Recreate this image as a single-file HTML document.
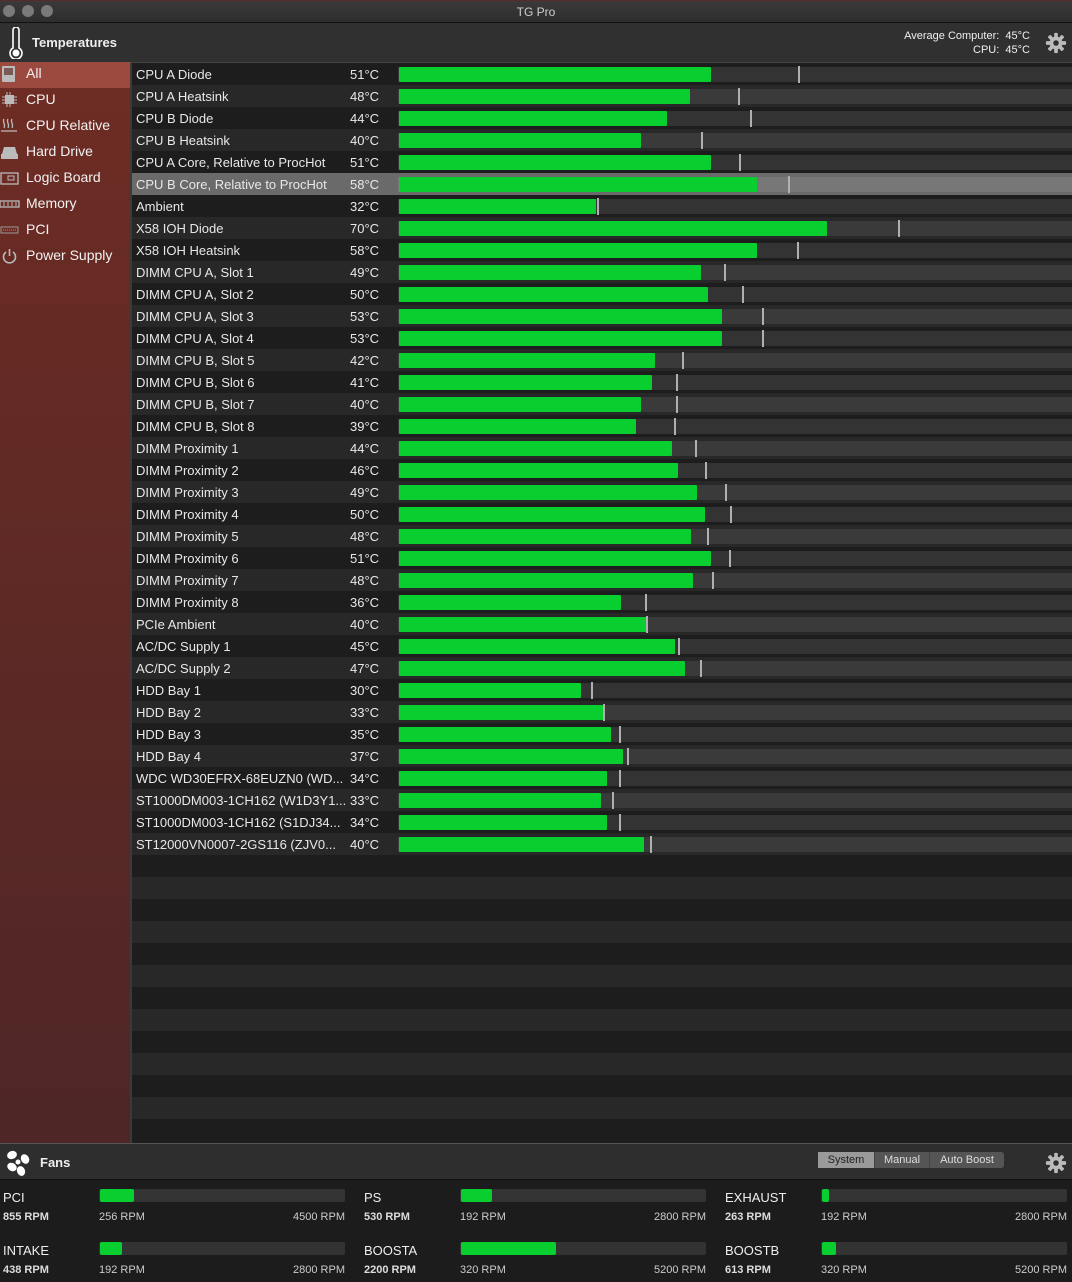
<!DOCTYPE html>
<html><head><meta charset="utf-8"><style>
*{margin:0;padding:0;box-sizing:border-box}
body{width:1072px;height:1282px;background:#1d1d1d;font-family:"Liberation Sans",sans-serif;color:#e8e8e8;position:relative;overflow:hidden}
.abs{position:absolute}
#title{left:0;top:0;width:1072px;height:23px;background:linear-gradient(#3a3a3a,#2e2e2e);border-top:1px solid #5a2a2a;border-bottom:1px solid #111;text-align:center;font-size:12px;color:#cfcfcf;line-height:22px}
.dot{width:12px;height:12px;border-radius:50%;background:#7a7a7a;top:5px}
#hdr{left:0;top:23px;width:1072px;height:40px;background:#303030;border-bottom:1px solid #444}
#side{left:0;top:63px;width:132px;height:1080px;background:linear-gradient(#6e2c24,#4e2626);border-right:2px solid #3a3a3a}
.si{position:absolute;left:26px;font-size:14px;color:#f2f2f2}
.ic{position:absolute;left:0px}
#list{left:132px;top:63px;width:940px;height:1080px}
.row{position:absolute;left:0;width:940px;height:22px;font-size:13px;line-height:24px}
.nm{position:absolute;left:4px;white-space:nowrap}
.tp{position:absolute;left:218px}
.trk{position:absolute;left:266px;top:4px;width:674px;height:15px}
.gr{position:absolute;left:267px;top:4px;height:15px;background:#08cf2f;border-radius:1px}
.mk{position:absolute;top:3px;width:2px;height:17px;background:#b0b0b0}
#fh{left:0;top:1143px;width:1072px;height:37px;background:#2e2e2e;border-top:1px solid #555;border-bottom:1px solid #111}
#fb{left:0;top:1180px;width:1072px;height:102px;background:#1c1c1c}
.fl{position:absolute;font-size:13px;color:#eee}
.fr{position:absolute;font-size:11px;font-weight:bold;color:#ddd}
.fm{position:absolute;font-size:11px;color:#ccc}
.ft{position:absolute;height:13px;background:#333;border-radius:2px}
.fg{position:absolute;height:13px;background:#08cf2f;border-radius:2px}
#seg{left:818px;top:1152px;height:16px;width:186px;background:#555;border-radius:3px;font-size:11px;display:flex}
#seg div{line-height:16px;text-align:center;color:#ddd;border-right:1px solid #444}
</style></head><body>
<div id="title" class="abs">TG Pro</div>
<div class="abs dot" style="left:3px"></div><div class="abs dot" style="left:22px"></div><div class="abs dot" style="left:41px"></div>
<div id="hdr" class="abs">
<svg class="abs" style="left:8px;top:4px" width="16" height="32" viewBox="0 0 16 32"><path d="M5 3a3 3 0 0 1 6 0v18a6 6 0 1 1-6 0z" fill="none" stroke="#fff" stroke-width="1.6"/><circle cx="8" cy="26" r="3.5" fill="#fff"/></svg>
<div class="abs" style="left:32px;top:12px;font-size:13px;font-weight:bold;color:#eee">Temperatures</div>
<div class="abs" style="right:42px;top:6px;font-size:11px;text-align:right;line-height:14px;color:#eee">Average Computer:&nbsp; 45°C<br>CPU:&nbsp; 45°C</div>
<svg class="abs" style="left:1045px;top:9px" width="22" height="22" viewBox="0 0 24 24"><g fill="#bbb"><circle cx="12" cy="12" r="7"/><rect x="10" y="1" width="4" height="22" rx="1"/><rect x="10" y="1" width="4" height="22" rx="1" transform="rotate(45 12 12)"/><rect x="10" y="1" width="4" height="22" rx="1" transform="rotate(90 12 12)"/><rect x="10" y="1" width="4" height="22" rx="1" transform="rotate(135 12 12)"/></g><circle cx="12" cy="12" r="3" fill="#303030"/></svg>
</div>
<div id="side" class="abs">
<div class="abs" style="left:0;top:-1px;width:130px;height:26px;background:#9c4a40"></div>
</div>
<div id="list" class="abs"></div>
<div id="fh" class="abs">
<svg class="abs" style="left:4px;top:4px" width="28" height="28" viewBox="0 0 28 28"><g fill="#fff"><ellipse cx="8" cy="7" rx="5" ry="4" transform="rotate(-20 8 7)"/><ellipse cx="21" cy="11" rx="5" ry="4" transform="rotate(60 21 11)"/><ellipse cx="8" cy="19" rx="5" ry="4" transform="rotate(30 8 19)"/><ellipse cx="17" cy="23" rx="4" ry="5" transform="rotate(-20 17 23)"/><circle cx="14" cy="14" r="2.5"/></g></svg>
<div class="abs" style="left:40px;top:11px;font-size:13px;font-weight:bold;color:#eee">Fans</div>
<svg class="abs" style="left:1045px;top:8px" width="22" height="22" viewBox="0 0 24 24"><g fill="#bbb"><circle cx="12" cy="12" r="7"/><rect x="10" y="1" width="4" height="22" rx="1"/><rect x="10" y="1" width="4" height="22" rx="1" transform="rotate(45 12 12)"/><rect x="10" y="1" width="4" height="22" rx="1" transform="rotate(90 12 12)"/><rect x="10" y="1" width="4" height="22" rx="1" transform="rotate(135 12 12)"/></g><circle cx="12" cy="12" r="3" fill="#2e2e2e"/></svg>
</div>
<div id="seg" class="abs"><div style="width:57px;background:#9a9a9a;color:#222">System</div><div style="width:55px">Manual</div><div style="width:74px;border:none">Auto Boost</div></div>
<div id="fb" class="abs"></div>
<script>
var side=document.getElementById('side');
var ICONS=[
'<rect x="2" y="1" width="13" height="16" rx="1" fill="#bbb"/><rect x="4" y="3" width="9" height="7" fill="#7a5a55"/>',
'<rect x="5" y="4" width="9" height="9" fill="#bbb"/><path d="M2 6h3M2 9h3M2 12h3M14 6h3M14 9h3M14 12h3M7 1v3M10 1v3M7 13v3M10 13v3" stroke="#bbb"/>',
'<path d="M4 2c-2 3 2 5 0 9M8 2c-2 3 2 5 0 9M12 2c-2 3 2 5 0 9M1 14h16" stroke="#bbb" fill="none" stroke-width="1.3"/>',
'<path d="M4 4h11l2 7H2z" fill="#bbb"/><rect x="1" y="11" width="17" height="5" fill="#bbb"/>',
'<rect x="1" y="4" width="17" height="11" fill="none" stroke="#bbb" stroke-width="1.3"/><rect x="8" y="7" width="6" height="4" fill="none" stroke="#bbb"/>',
'<rect x="0" y="6" width="19" height="6" fill="none" stroke="#bbb" stroke-width="1.3"/><path d="M4 7v4M8 7v4M12 7v4M16 7v4" stroke="#bbb"/>',
'<rect x="1" y="6" width="17" height="6" fill="none" stroke="#999" stroke-width="1"/><path d="M3 9h13" stroke="#999" stroke-dasharray="1 1"/>',
'<path d="M6 5a6 6 0 1 0 7 0" fill="none" stroke="#bbb" stroke-width="1.6"/><path d="M9.5 2v7" stroke="#bbb" stroke-width="1.6"/>'];
['All','CPU','CPU Relative','Hard Drive','Logic Board','Memory','PCI','Power Supply'].forEach(function(n,i){
 var d=document.createElement('div');d.className='si';d.style.top=(2+26*i)+'px';d.textContent=n;side.appendChild(d);
 var s=document.createElement('div');s.className='ic';s.style.top=(2+26*i)+'px';s.innerHTML='<svg width="20" height="18" viewBox="0 0 20 18">'+ICONS[i]+'</svg>';side.appendChild(s);
});
var D=[["CPU A Diode",51,711,799],["CPU A Heatsink",48,690,739],["CPU B Diode",44,667,751],["CPU B Heatsink",40,641,702],["CPU A Core, Relative to ProcHot",51,711,740],["CPU B Core, Relative to ProcHot",58,757,789],["Ambient",32,596,598],["X58 IOH Diode",70,827,899],["X58 IOH Heatsink",58,757,798],["DIMM CPU A, Slot 1",49,701,725],["DIMM CPU A, Slot 2",50,708,743],["DIMM CPU A, Slot 3",53,722,763],["DIMM CPU A, Slot 4",53,722,763],["DIMM CPU B, Slot 5",42,655,683],["DIMM CPU B, Slot 6",41,652,677],["DIMM CPU B, Slot 7",40,641,677],["DIMM CPU B, Slot 8",39,636,675],["DIMM Proximity 1",44,672,696],["DIMM Proximity 2",46,678,706],["DIMM Proximity 3",49,697,726],["DIMM Proximity 4",50,705,731],["DIMM Proximity 5",48,691,708],["DIMM Proximity 6",51,711,730],["DIMM Proximity 7",48,693,713],["DIMM Proximity 8",36,621,646],["PCIe Ambient",40,647,647],["AC/DC Supply 1",45,675,679],["AC/DC Supply 2",47,685,701],["HDD Bay 1",30,581,592],["HDD Bay 2",33,603,604],["HDD Bay 3",35,611,620],["HDD Bay 4",37,623,628],["WDC WD30EFRX-68EUZN0 (WD...",34,607,620],["ST1000DM003-1CH162 (W1D3Y1...",33,601,613],["ST1000DM003-1CH162 (S1DJ34...",34,607,620],["ST12000VN0007-2GS116 (ZJV0...",40,644,651]];
var L=document.getElementById('list'),h='';
for(var i=0;i<49;i++){
 var bg=i==5?'#6a6a6a':(i%2?'#282828':'#1d1d1d');
 h+='<div class="row" style="top:'+(22*i)+'px;background:'+bg+'">';
 var d=D[i];
 if(d){h+='<span class="nm">'+d[0]+'</span><span class="tp">'+d[1]+'°C</span><div class="trk" style="background:'+(i==5?'#777':(i%2?'#3a3a3a':'#333'))+'"></div><div class="gr" style="width:'+(d[2]-399)+'px"></div><div class="mk" style="left:'+(d[3]-133)+'px"></div>'}
 h+='</div>';
}
L.innerHTML=h;
var F=[["PCI","855 RPM","256 RPM","4500 RPM",0,0,34],["PS","530 RPM","192 RPM","2800 RPM",1,0,31],["EXHAUST","263 RPM","192 RPM","2800 RPM",2,0,7],["INTAKE","438 RPM","192 RPM","2800 RPM",0,1,22],["BOOSTA","2200 RPM","320 RPM","5200 RPM",1,1,95],["BOOSTB","613 RPM","320 RPM","5200 RPM",2,1,14]];
var X=[[3,99,345],[364,460,706],[725,821,1067]],fb=document.getElementById('fb'),g='';
F.forEach(function(f){var c=X[f[4]],y=f[5]*53;
g+='<div class="fl" style="left:'+c[0]+'px;top:'+(10+y)+'px">'+f[0]+'</div><div class="fr" style="left:'+c[0]+'px;top:'+(31+y)+'px">'+f[1]+'</div>';
g+='<div class="ft" style="left:'+c[1]+'px;top:'+(9+y)+'px;width:'+(c[2]-c[1])+'px"></div><div class="fg" style="left:'+(c[1]+1)+'px;top:'+(9+y)+'px;width:'+f[6]+'px"></div>';
g+='<div class="fm" style="left:'+c[1]+'px;top:'+(31+y)+'px">'+f[2]+'</div><div class="fm" style="left:'+(c[2]-80)+'px;width:80px;text-align:right;top:'+(31+y)+'px">'+f[3]+'</div>';});
fb.innerHTML=g;
</script>
</body></html>
